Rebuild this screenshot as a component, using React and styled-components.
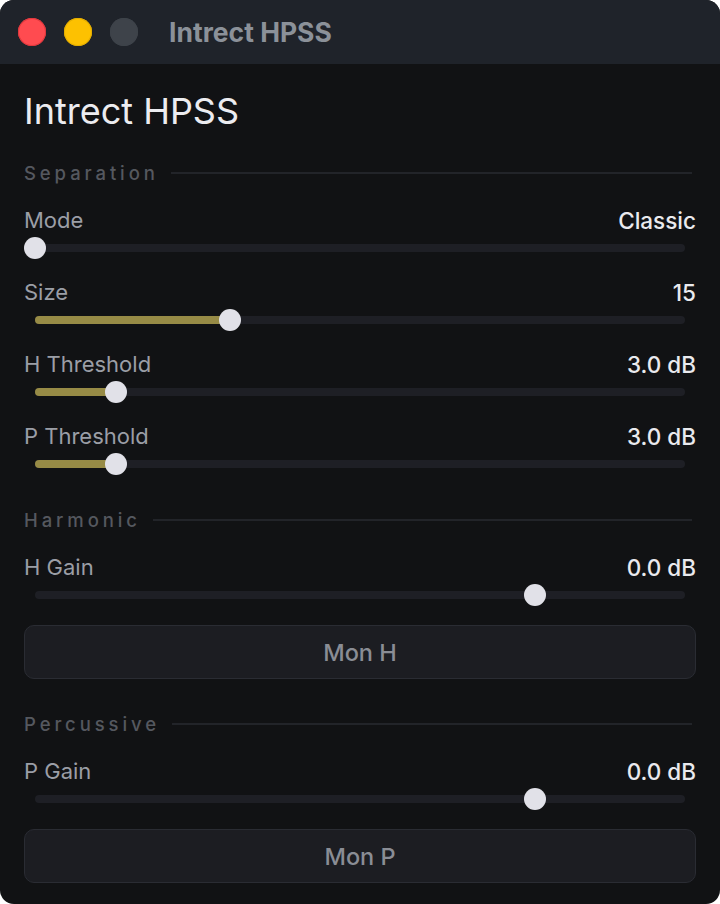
import React from "react";
import styled, { createGlobalStyle } from "styled-components";

const GlobalStyle = createGlobalStyle`
  html, body {
    margin: 0;
    padding: 0;
    background: #ffffff;
  }
  * {
    box-sizing: border-box;
  }
`;

const Window = styled.div`
  width: 720px;
  height: 904px;
  border-radius: 14px;
  overflow: hidden;
  background: #111214;
  font-family: Inter, "Liberation Sans", sans-serif;
  display: flex;
  flex-direction: column;
`;

const TitleBar = styled.div`
  height: 64px;
  flex-shrink: 0;
  background: #1f232a;
  display: flex;
  align-items: center;
  padding-left: 18px;
`;

const Light = styled.span`
  width: 28px;
  height: 28px;
  border-radius: 50%;
  background: ${(p) => p.color};
  box-shadow: inset 0 0 0 1px ${(p) => p.edge};
  margin-right: 18px;
`;

const WindowTitle = styled.div`
  margin-left: 13px;
  font-size: 26.5px;
  font-weight: 700;
  color: #8b9199;
`;

const Content = styled.div`
  padding: 0 24px;
  display: flex;
  flex-direction: column;
`;

const Heading = styled.h1`
  margin: 27px 0 32px;
  font-size: 36px;
  line-height: 40px;
  font-weight: 400;
  color: #ececf0;
`;

const Section = styled.section`
  display: flex;
  flex-direction: column;
  & + & {
    margin-top: 35px;
  }
`;

const SectionHeader = styled.div`
  height: 20px;
  display: flex;
  align-items: center;
  gap: 12px;
  margin-bottom: 25px;
`;

const SectionLabel = styled.span`
  font-size: 18.5px;
  font-weight: 500;
  letter-spacing: 3.9px;
  color: #55585f;
`;

const Rule = styled.div`
  flex: 1;
  height: 2px;
  background: #222429;
  margin-right: 4px;
`;

const Param = styled.div`
  display: flex;
  flex-direction: column;
  & + & {
    margin-top: 21px;
  }
`;

const ParamHead = styled.div`
  height: 24px;
  display: flex;
  align-items: center;
  justify-content: space-between;
  margin-bottom: 5px;
`;

const ParamLabel = styled.span`
  font-size: 22px;
  color: #9b9ea6;
`;

const ParamValue = styled.span`
  font-size: 22.5px;
  font-weight: 500;
  color: #eaeaee;
`;

const Slider = styled.div`
  height: 22px;
  padding: 0 11px;
  display: flex;
  align-items: center;
`;

const Track = styled.div`
  position: relative;
  flex: 1;
  height: 8px;
  border-radius: 4px;
  background: #1e1f25;
`;

const Fill = styled.div`
  height: 100%;
  border-radius: 4px;
  background: #978b46;
`;

const Thumb = styled.div`
  position: absolute;
  top: 50%;
  width: 22px;
  height: 22px;
  margin: -11px 0 0 -11px;
  border-radius: 50%;
  background: #e1e1e8;
`;

const MonButton = styled.button`
  margin-top: 19px;
  height: 54px;
  width: 100%;
  border-radius: 10px;
  border: 1px solid #2a2c33;
  background: #1c1d22;
  color: #8a8d95;
  font-family: inherit;
  font-size: 23.5px;
  font-weight: 500;
`;

const ParamSlider = ({ label, value, pos, fill }) => (
  <Param>
    <ParamHead>
      <ParamLabel>{label}</ParamLabel>
      <ParamValue>{value}</ParamValue>
    </ParamHead>
    <Slider>
      <Track>
        {fill && <Fill style={{ width: `${pos * 100}%` }} />}
        <Thumb style={{ left: `${pos * 100}%` }} />
      </Track>
    </Slider>
  </Param>
);

const Header = ({ children }) => (
  <SectionHeader>
    <SectionLabel>{children}</SectionLabel>
    <Rule />
  </SectionHeader>
);

export default function App() {
  return (
    <>
      <GlobalStyle />
      <Window>
        <TitleBar>
          <Light color="#ff4b50" edge="#e0383d" />
          <Light color="#fdc101" edge="#e3ad00" />
          <Light color="#3e434a" edge="#3e434a" />
          <WindowTitle>Intrect HPSS</WindowTitle>
        </TitleBar>
        <Content>
          <Heading>Intrect HPSS</Heading>
          <Section>
            <Header>Separation</Header>
            <ParamSlider label="Mode" value="Classic" pos={0} fill />
            <ParamSlider label="Size" value="15" pos={0.3} fill />
            <ParamSlider label="H Threshold" value="3.0 dB" pos={0.125} fill />
            <ParamSlider label="P Threshold" value="3.0 dB" pos={0.125} fill />
          </Section>
          <Section>
            <Header>Harmonic</Header>
            <ParamSlider label="H Gain" value="0.0 dB" pos={0.769} />
            <MonButton>Mon H</MonButton>
          </Section>
          <Section>
            <Header>Percussive</Header>
            <ParamSlider label="P Gain" value="0.0 dB" pos={0.769} />
            <MonButton>Mon P</MonButton>
          </Section>
        </Content>
      </Window>
    </>
  );
}
